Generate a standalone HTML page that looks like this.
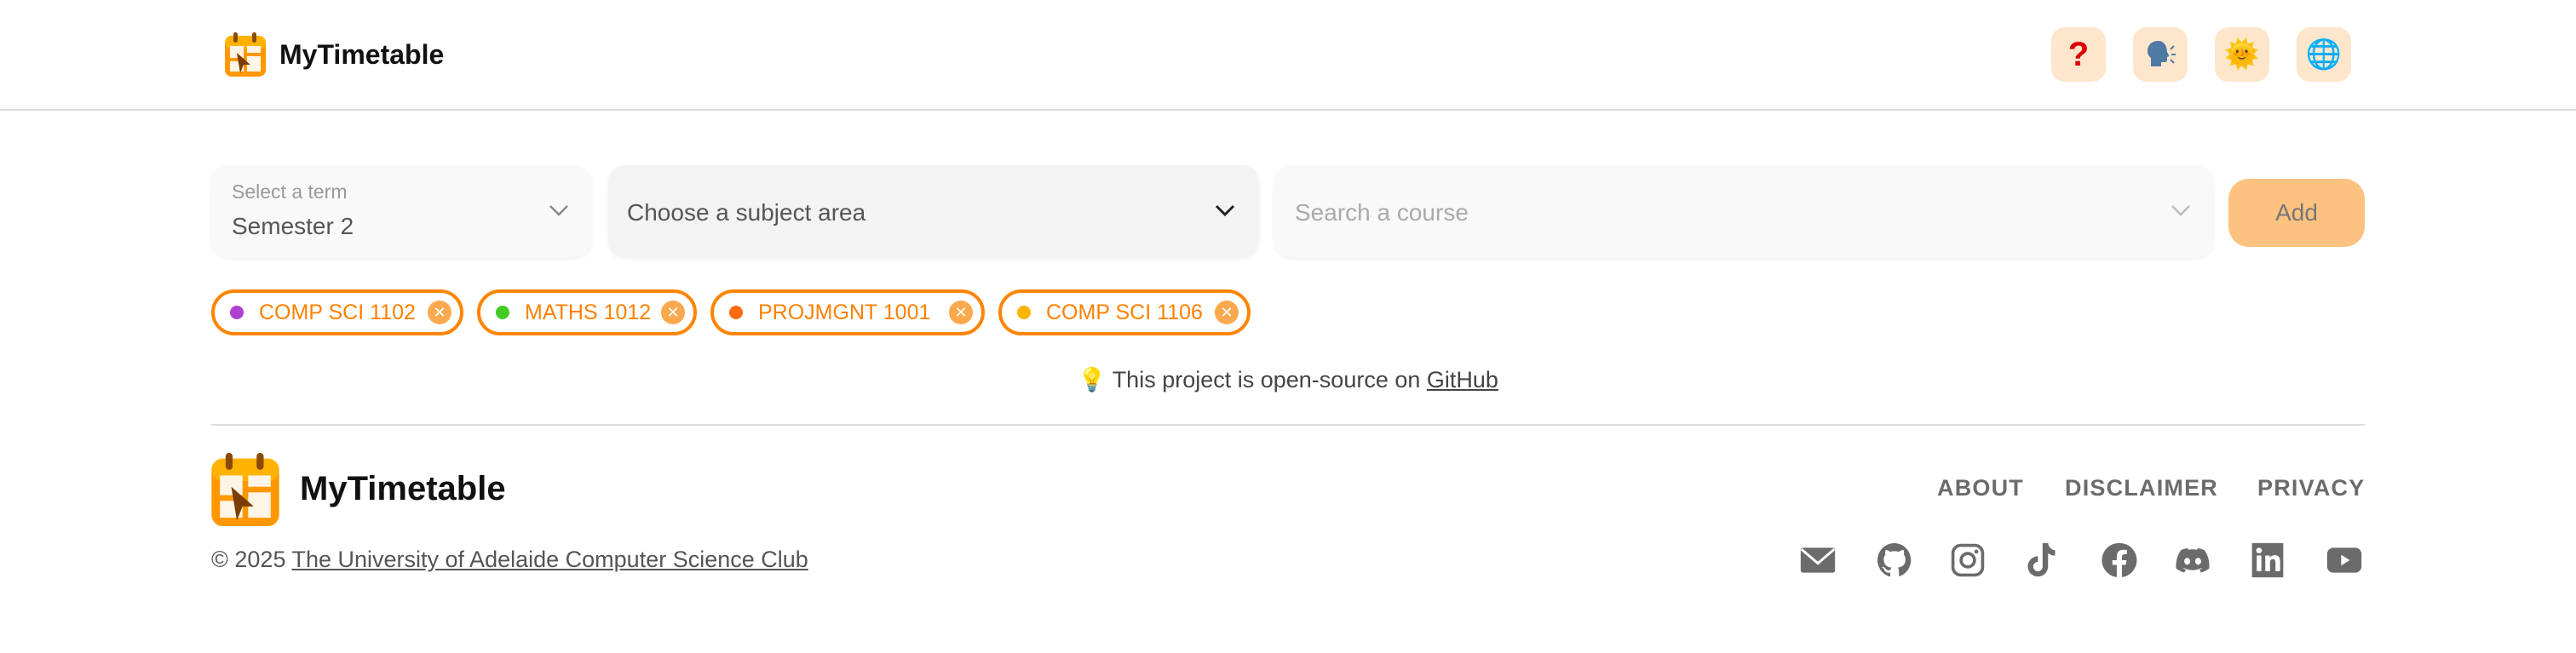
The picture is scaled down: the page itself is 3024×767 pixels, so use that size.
<!DOCTYPE html>
<html><head><meta charset="utf-8"><style>
html{zoom:2}
body{margin:0;width:1512px;height:383px;background:#fff;font-family:"Liberation Sans",sans-serif;color:#555;overflow:hidden;position:relative}
.a{position:absolute}
.hdr{left:0;top:0;width:1512px;height:64px;border-bottom:1px solid #ddd}
.btn{width:32px;height:32px;border-radius:8px;background:#fde6cc;top:16px;display:flex;align-items:center;justify-content:center;font-size:17px;font-family:"DejaVu Sans",sans-serif}
.box{top:97px;height:54px;border-radius:10px;box-shadow:0 1px 3px rgba(0,0,0,.06)}
.chip{top:170px;height:23px;border:2px solid #ff8400;border-radius:14px;display:flex;align-items:center;font-size:12.5px;color:#ff8000;padding-left:9px;box-sizing:content-box;white-space:nowrap}
.dot{width:8px;height:8px;border-radius:50%;margin-right:9px}
.x{width:14px;height:14px;border-radius:50%;background:#fba94f;color:#fff;font-size:9px;display:flex;align-items:center;justify-content:center;position:absolute;right:5px;top:4.5px}
.nav{font-weight:bold;font-size:13.5px;color:#6b6b6b;letter-spacing:.6px;top:279px}
svg.i{position:absolute;top:318px;width:22px;height:22px;fill:#6b6b6b}
</style></head><body>
<div class="a hdr"></div>
<svg class="a" style="left:132px;top:19px" width="24" height="26" viewBox="0 0 24 26">
<rect x="0" y="2" width="24" height="24" rx="4" fill="#ff9800"/><rect x="0" y="2" width="24" height="8" rx="4" fill="#ffb300"/>
<rect x="5" y="0" width="2.5" height="6" rx="1.2" fill="#8a4b08"/><rect x="16" y="0" width="2.5" height="6" rx="1.2" fill="#8a4b08"/>
<rect x="3" y="8" width="8" height="7" fill="#fff5e6"/><rect x="13" y="8" width="8" height="4" fill="#fff5e6"/><rect x="13" y="14" width="8" height="9" fill="#fff5e6"/><rect x="3" y="17" width="8" height="6" fill="#fff5e6"/>
<path d="M7 12 L15 19 L11 19 L9 24 Z" fill="#7a3e05"/></svg>
<div class="a" style="left:164px;top:23px;font-weight:bold;font-size:16px;color:#111">MyTimetable</div>
<div class="a btn" style="left:1204px;color:#d00;font-weight:bold;font-size:20px;font-family:'Liberation Sans',sans-serif">?</div>
<div class="a btn" style="left:1252px"><svg width="20" height="20" viewBox="0 0 20 20"><path d="M9 2c-4 0-6.500 2.500-6.500 6 0 2 1 3.200 2 4v5h6v-2.500h2c1 0 1.500-.5 1.500-1.500v-1.500l1.300-.5-1.300-2.500C14 5 12 2 9 2z" fill="#4f7aa5"/><path d="M16 7l2-2M16.500 10h2.500M16 13l2 2" stroke="#4f7aa5" stroke-width="1"/></svg></div>
<div class="a btn" style="left:1300px">🌞</div>
<div class="a btn" style="left:1348px">🌐</div>

<div class="a box" style="left:124px;width:223px;background:#f9f9f9"></div>
<div class="a" style="left:136px;top:106px;font-size:11.5px;color:#999">Select a term</div>
<div class="a" style="left:136px;top:125px;font-size:14px;color:#555">Semester 2</div>
<svg class="a" style="left:322px;top:120px" width="12" height="8" viewBox="0 0 12 8"><path d="M1 1l5 5 5-5" fill="none" stroke="#888" stroke-width="1.2"/></svg>
<div class="a box" style="left:357px;width:382px;background:#f3f3f3"></div>
<div class="a" style="left:368px;top:117px;font-size:14px;color:#555">Choose a subject area</div>
<svg class="a" style="left:713px;top:120px" width="12" height="8" viewBox="0 0 12 8"><path d="M1 1l5 5 5-5" fill="none" stroke="#222" stroke-width="1.5"/></svg>
<div class="a box" style="left:748px;width:551px;background:#f9f9f9"></div>
<div class="a" style="left:760px;top:117px;font-size:14px;color:#aaa">Search a course</div>
<svg class="a" style="left:1274px;top:120px" width="12" height="8" viewBox="0 0 12 8"><path d="M1 1l5 5 5-5" fill="none" stroke="#bbb" stroke-width="1.2"/></svg>
<div class="a" style="left:1308px;top:105px;width:80px;height:40px;border-radius:12px;background:#fdc27f;color:#777;font-size:14px;display:flex;align-items:center;justify-content:center">Add</div>

<div class="a chip" style="left:124px;width:135px"><span class="dot" style="background:#b040d0"></span>COMP SCI 1102<span class="x">✕</span></div>
<div class="a chip" style="left:280px;width:116px"><span class="dot" style="background:#44cc22"></span>MATHS 1012<span class="x">✕</span></div>
<div class="a chip" style="left:417px;width:148px"><span class="dot" style="background:#ff6a10"></span>PROJMGNT 1001<span class="x">✕</span></div>
<div class="a chip" style="left:586px;width:135px"><span class="dot" style="background:#ffb300"></span>COMP SCI 1106<span class="x">✕</span></div>

<div class="a" style="left:0;width:1512px;text-align:center;top:215px;font-size:13.5px;color:#444">💡 This project is open-source on <u>GitHub</u></div>
<div class="a" style="left:124px;top:249px;width:1264px;height:1px;background:#ddd"></div>

<svg class="a" style="left:124px;top:266px" width="40" height="43" viewBox="0 0 24 26">
<rect x="0" y="2" width="24" height="24" rx="4" fill="#ff9800"/><rect x="0" y="2" width="24" height="8" rx="4" fill="#ffb300"/>
<rect x="5" y="0" width="2.5" height="6" rx="1.2" fill="#8a4b08"/><rect x="16" y="0" width="2.5" height="6" rx="1.2" fill="#8a4b08"/>
<rect x="3" y="8" width="8" height="7" fill="#fff5e6"/><rect x="13" y="8" width="8" height="4" fill="#fff5e6"/><rect x="13" y="14" width="8" height="9" fill="#fff5e6"/><rect x="3" y="17" width="8" height="6" fill="#fff5e6"/>
<path d="M7 12 L15 19 L11 19 L9 24 Z" fill="#7a3e05"/></svg>
<div class="a" style="left:176px;top:276px;font-weight:bold;font-size:20px;color:#111">MyTimetable</div>
<div class="a nav" style="left:1137px">ABOUT</div>
<div class="a nav" style="left:1212px">DISCLAIMER</div>
<div class="a nav" style="left:1325px">PRIVACY</div>
<div class="a" style="left:124px;top:321px;font-size:13.5px;color:#555">© 2025 <u>The University of Adelaide Computer Science Club</u></div>

<svg class="i" style="left:1056px" viewBox="0 0 24 24"><rect x="1" y="4" width="22" height="16" rx="1.5"/><path d="M1.5 5l10.500 9 10.500-9" fill="none" stroke="#fff" stroke-width="1.6"/></svg>
<svg class="i" style="left:1101px" viewBox="0 0 24 24"><path d="M12 1a11 11 0 0 0-3.5 21.4c.6.1.8-.2.8-.5v-2c-3 .7-3.7-1.4-3.7-1.4-.5-1.3-1.2-1.6-1.2-1.6-1-.7.1-.7.1-.7 1.1.1 1.7 1.1 1.7 1.1 1 1.7 2.6 1.2 3.2.9.1-.7.4-1.2.7-1.5-2.4-.3-5-1.2-5-5.4 0-1.2.4-2.2 1.1-2.9-.1-.3-.5-1.4.1-2.9 0 0 .9-.3 3 1.1a10 10 0 0 1 5.5 0c2.1-1.4 3-1.1 3-1.1.6 1.5.2 2.6.1 2.9.7.8 1.1 1.7 1.1 2.9 0 4.2-2.6 5.1-5 5.4.4.3.8 1 .8 2v3c0 .3.2.6.8.5A11 11 0 0 0 12 1z"/></svg>
<svg class="i" style="left:1144px" viewBox="0 0 24 24"><rect x="2.5" y="2.5" width="19" height="19" rx="5" fill="none" stroke="#6b6b6b" stroke-width="2"/><circle cx="12" cy="12" r="4.3" fill="none" stroke="#6b6b6b" stroke-width="2"/><circle cx="17.5" cy="6.5" r="1.3"/></svg>
<svg class="i" style="left:1187px" viewBox="0 0 24 24"><path d="M13 1h3.5c.3 2.6 2 4.3 4.5 4.6v3.5c-1.7 0-3.200-.6-4.500-1.500V16a6.5 6.5 0 1 1-6.5-6.5v3.6a3 3 0 1 0 3 3z"/></svg>
<svg class="i" style="left:1233px" viewBox="0 0 24 24"><path d="M12 1a11 11 0 0 0-1.7 21.9V15H7.5v-3h2.8V9.6c0-2.8 1.6-4.300 4.100-4.300 1.200 0 2.400.2 2.400.2v2.700h-1.400c-1.300 0-1.800.8-1.800 1.700V12h3l-.5 3h-2.500v7.900A11 11 0 0 0 12 1z"/></svg>
<svg class="i" style="left:1276px" viewBox="0 0 24 24"><path d="M19.5 5.500A17 17 0 0 0 15.300 4.200l-.5 1.100a16 16 0 0 0-5.600 0l-.5-1.100A17 17 0 0 0 4.500 5.500C1.800 9.500 1.100 13.400 1.400 17.300a17 17 0 0 0 5.200 2.600l1.100-1.800-1.700-.8.4-.3a12 12 0 0 0 11.200 0l.4.3-1.700.8 1.100 1.800a17 17 0 0 0 5.200-2.600c.4-4.500-.7-8.400-3.100-11.800zM8.500 14.900c-1 0-1.900-1-1.900-2.200s.8-2.200 1.900-2.200 1.900 1 1.900 2.200-.8 2.200-1.900 2.200zm7 0c-1 0-1.900-1-1.900-2.200s.8-2.200 1.900-2.200 1.900 1 1.900 2.200-.8 2.200-1.900 2.200z"/></svg>
<svg class="i" style="left:1320px" viewBox="0 0 24 24"><path d="M2 1h20v22H2z"/><g fill="#fff"><rect x="5" y="9" width="3" height="10"/><circle cx="6.5" cy="5.8" r="1.8"/><path d="M10.500 9h2.900v1.400c.5-.9 1.600-1.600 3.200-1.600 2.900 0 3.400 1.900 3.400 4.400V19h-3v-5.200c0-1.200-.1-2.500-1.600-2.500s-1.900 1.200-1.900 2.400V19h-3z"/></g></svg>
<svg class="i" style="left:1365px" viewBox="0 0 24 24"><rect x="1" y="4" width="22" height="16" rx="4"/><path d="M10 8.500v7l5.500-3.500z" fill="#fff"/></svg>
</body></html>
